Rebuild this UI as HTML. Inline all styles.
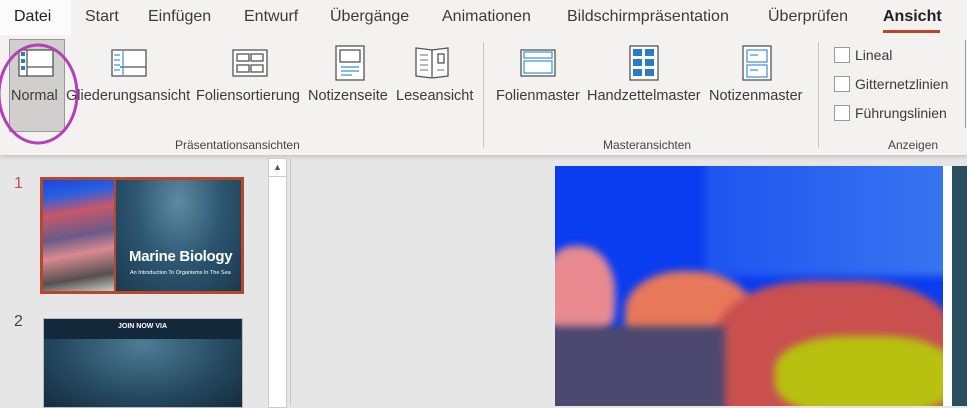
<!DOCTYPE html><html><head><style>
body{margin:0;width:967px;height:406px;overflow:hidden;background:#e6e6e6;font-family:"Liberation Sans",sans-serif;position:relative}
.a{position:absolute}
.tab{position:absolute;top:8px;font-size:16px;color:#3b3b3b}
.lbl{position:absolute;top:88px;font-size:14.5px;color:#3b3b3b;white-space:nowrap}
.grp{position:absolute;top:138px;font-size:12px;color:#444}
.cb{position:absolute;left:834px;width:14px;height:14px;border:1px solid #999;background:#fff}
.cbl{position:absolute;left:855px;font-size:14px;color:#3b3b3b}
.b{filter:blur(4px)}
</style></head><body>
<div class="a" style="left:0;top:0;width:967px;height:155px;background:#f3f2f1;box-shadow:0 2px 4px rgba(0,0,0,.15)"></div>
<div class="a" style="left:0;top:0;width:71px;height:35px;background:#fbfbfb"></div>
<div class="tab" style="left:14px;color:#222;">Datei</div>
<div class="tab" style="left:85px">Start</div>
<div class="tab" style="left:148px">Einfügen</div>
<div class="tab" style="left:244px">Entwurf</div>
<div class="tab" style="left:330px">Übergänge</div>
<div class="tab" style="left:442px">Animationen</div>
<div class="tab" style="left:567px">Bildschirmpräsentation</div>
<div class="tab" style="left:768px">Überprüfen</div>
<div class="tab" style="left:883px;color:#222;font-weight:bold">Ansicht</div>
<div class="a" style="left:883px;top:30px;width:57px;height:3px;background:#b7472a"></div>
<div class="a" style="left:9px;top:39px;width:54px;height:91px;background:#d0cfce;border:1px solid #999"></div>
<svg class="a" style="left:0;top:30px" width="967" height="60">
<g fill="#fff" stroke="#555" stroke-width="1.3">
<rect x="19" y="20" width="34" height="26"/><line x1="27" y1="20" x2="27" y2="46"/><line x1="27" y1="37" x2="53" y2="37"/>
<rect x="112" y="20" width="34" height="26"/><line x1="27" y1="37" x2="53" y2="37" transform="translate(93 0)"/>
<rect x="233" y="20" width="34" height="26"/><rect x="237" y="24" width="12" height="7"/><rect x="251" y="24" width="12" height="7"/><rect x="237" y="35" width="12" height="7"/><rect x="251" y="35" width="12" height="7"/>
<rect x="336" y="16" width="28" height="34"/><rect x="340" y="20" width="20" height="12"/>
<path d="M416 18 L432 20 L448 18 L448 46 L432 48 L416 46 Z"/><line x1="432" y1="20" x2="432" y2="48"/><rect x="438" y="24" width="6" height="9"/>
<rect x="521" y="20" width="34" height="26"/>
<rect x="630" y="16" width="28" height="34"/>
<rect x="743" y="16" width="28" height="34"/>
</g>
<g fill="none" stroke="#3a8fd6" stroke-width="1.2">
<line x1="123" y1="21" x2="123" y2="45"/><rect x="524" y="22" width="28" height="6"/><rect x="524" y="31" width="28" height="12"/>
<rect x="747" y="20" width="20" height="12"/><rect x="747" y="35" width="20" height="12"/>
</g>
<g fill="#2d7bc4"><rect x="21" y="22" width="4" height="4"/><rect x="21" y="29" width="4" height="4"/><rect x="21" y="36" width="4" height="4"/>
<rect x="633" y="19" width="9" height="7"/><rect x="645" y="19" width="9" height="7"/><rect x="633" y="29" width="9" height="7"/><rect x="645" y="29" width="9" height="7"/><rect x="633" y="39" width="9" height="7"/><rect x="645" y="39" width="9" height="7"/></g>
<g stroke="#3a8fd6" stroke-width="1.2"><line x1="114" y1="25" x2="120" y2="25"/><line x1="114" y1="30" x2="120" y2="30"/><line x1="114" y1="35" x2="120" y2="35"/><line x1="114" y1="40" x2="120" y2="40"/>
<line x1="341" y1="37" x2="359" y2="37"/><line x1="341" y1="41" x2="359" y2="41"/><line x1="341" y1="45" x2="352" y2="45"/>
<line x1="750" y1="25" x2="758" y2="25"/><line x1="750" y1="40" x2="758" y2="40"/></g>
<g stroke="#888" stroke-width="1.2"><line x1="420" y1="25" x2="428" y2="25"/><line x1="420" y1="30" x2="428" y2="30"/><line x1="420" y1="35" x2="428" y2="35"/><line x1="420" y1="40" x2="428" y2="40"/><line x1="437" y1="40" x2="444" y2="40"/></g>
</svg>
<svg class="a" style="left:0;top:30px" width="90" height="120"><ellipse cx="38" cy="64" rx="39" ry="49" fill="none" stroke="#b43fb8" stroke-width="3"/></svg>
<div class="lbl" style="left:11px">Normal</div>
<div class="lbl" style="left:66px">Gliederungsansicht</div>
<div class="lbl" style="left:196px">Foliensortierung</div>
<div class="lbl" style="left:308px">Notizenseite</div>
<div class="lbl" style="left:396px">Leseansicht</div>
<div class="lbl" style="left:496px">Folienmaster</div>
<div class="lbl" style="left:587px">Handzettelmaster</div>
<div class="lbl" style="left:709px">Notizenmaster</div>
<div class="grp" style="left:175px">Präsentationsansichten</div>
<div class="grp" style="left:603px">Masteransichten</div>
<div class="grp" style="left:888px">Anzeigen</div>
<div class="a" style="left:483px;top:42px;width:1px;height:106px;background:#c8c8c8"></div>
<div class="a" style="left:818px;top:42px;width:1px;height:106px;background:#c8c8c8"></div>
<div class="a" style="left:965px;top:40px;width:1px;height:88px;background:#999"></div>
<div class="cb" style="top:47px"></div><div class="cbl" style="top:47px">Lineal</div>
<div class="cb" style="top:76px"></div><div class="cbl" style="top:76px">Gitternetzlinien</div>
<div class="cb" style="top:105px"></div><div class="cbl" style="top:105px">Führungslinien</div>
<div class="a" style="left:14px;top:175px;font-size:16px;color:#c0504d">1</div>
<div class="a" style="left:14px;top:313px;font-size:16px;color:#444">2</div>
<div class="a" style="left:40px;top:177px;width:204px;height:117px;background:#b7472a"></div>
<div class="a" style="left:43px;top:180px;width:71px;height:111px;background:linear-gradient(170deg,#1b48d8 0%,#2a5fe0 15%,#c6586a 30%,#6a5a8a 50%,#d98a90 65%,#55504f 85%,#ccc 100%)"></div>
<div class="a" style="left:116px;top:180px;width:125px;height:111px;background:radial-gradient(ellipse at 50% 20%,#5f8aa0,#2c5670 50%,#1b3950)"></div>
<div class="a" style="left:129px;top:248px;font-size:15px;font-weight:bold;color:#fff;letter-spacing:-0.3px">Marine Biology</div>
<div class="a" style="left:130px;top:270px;font-size:5.5px;color:#fff">An Introduction To Organisms In The Sea</div>
<div class="a" style="left:43px;top:318px;width:198px;height:88px;background:radial-gradient(ellipse at 50% 30%,#4d7d94,#24485f 60%,#152c3e);border:1px solid #bbb"></div>
<div class="a" style="left:44px;top:319px;width:197px;height:20px;background:#13283a"></div>
<div class="a" style="left:118px;top:323px;font-size:7px;font-weight:bold;color:#fff">JOIN NOW VIA</div>
<div class="a" style="left:268px;top:158px;width:17px;height:248px;background:#fff;border:1px solid #ccc"></div>
<div class="a" style="left:268px;top:158px;width:17px;height:17px;border:1px solid #ccc;background:#fff;font-size:9px;color:#555;text-align:center;line-height:17px">▲</div>
<div class="a" style="left:290px;top:158px;width:1px;height:248px;background:#c8c8c8"></div>
<div class="a" style="left:555px;top:166px;width:388px;height:240px;background:#0a3cf0;overflow:hidden">
<div class="a b" style="left:150px;top:-10px;width:260px;height:120px;background:linear-gradient(90deg,#1e54f0,#3a78f0)"></div>
<div class="a b" style="left:-10px;top:80px;width:70px;height:90px;background:#e88a90;border-radius:40% 50% 30% 30%"></div>
<div class="a b" style="left:70px;top:105px;width:130px;height:90px;background:#e8785a;border-radius:45% 50% 30% 40%"></div>
<div class="a b" style="left:160px;top:115px;width:240px;height:140px;background:#c9504f;border-radius:40% 40% 10% 10%"></div>
<div class="a b" style="left:-10px;top:160px;width:180px;height:90px;background:#4c4870"></div>
<div class="a b" style="left:220px;top:170px;width:180px;height:80px;background:#b8c010;border-radius:40%"></div>
</div>
<div class="a" style="left:943px;top:166px;width:9px;height:240px;background:#fff"></div>
<div class="a" style="left:952px;top:166px;width:15px;height:240px;background:#2a4f60"></div>
</body></html>
